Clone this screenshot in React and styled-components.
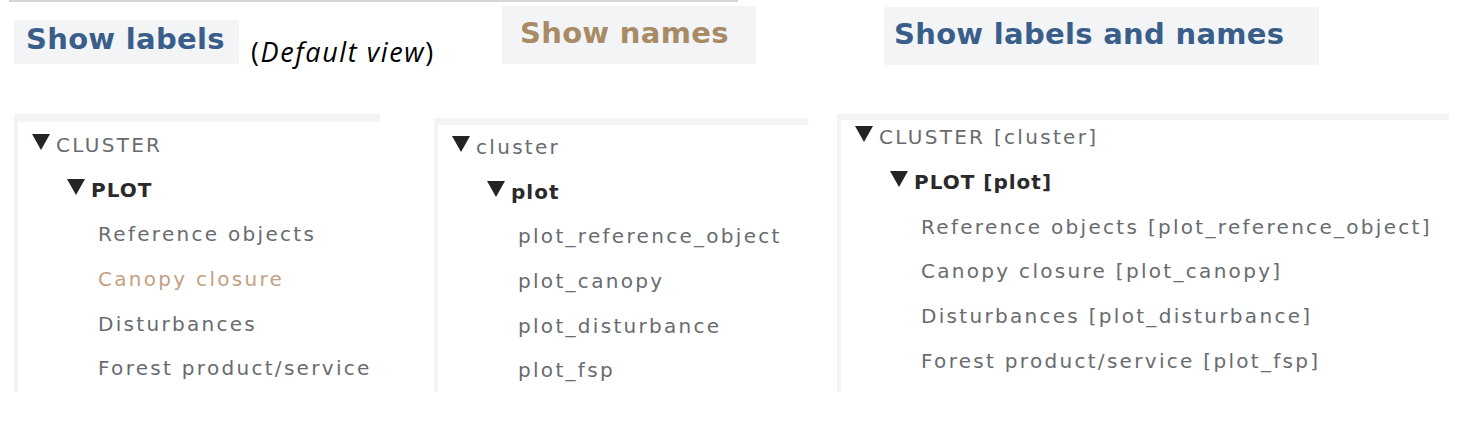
import React from "react";
import styled, { createGlobalStyle } from "styled-components";

const GlobalStyle = createGlobalStyle`
  html, body { margin: 0; padding: 0; background: #ffffff; }
  body { font-family: "DejaVu Sans", "Noto Sans", sans-serif; }
  * { box-sizing: border-box; }
`;

const Page = styled.div`
  width: 1459px;
  height: 435px;
  background: #ffffff;
  overflow: hidden;
`;

const TopRule = styled.div`
  width: 729px;
  height: 2px;
  margin-left: 9px;
  background: #d6d6d6;
`;

const Columns = styled.div`
  display: flex;
  padding-left: 14px;
`;

const Column = styled.section`
  display: flex;
  flex-direction: column;
  min-width: 0;
  flex: ${(p) => (p.$width ? `0 0 ${p.$width}px` : "1 1 auto")};
`;

const Header = styled.div`
  display: flex;
  align-items: flex-start;
  height: 62px;
`;

const ViewButton = styled.div`
  flex: none;
  margin-top: ${(p) => p.$top}px;
  margin-left: ${(p) => p.$left || 0}px;
  width: ${(p) => p.$w}px;
  height: ${(p) => p.$h}px;
  padding-left: ${(p) => p.$pl}px;
  padding-top: ${(p) => p.$pt}px;
  background: #f3f4f6;
  font-family: "DejaVu Sans", sans-serif;
  font-weight: 700;
  font-size: 29px;
  line-height: 29px;
  letter-spacing: 0.3px;
  white-space: nowrap;
  color: ${(p) => (p.$tone === "gold" ? "#a88a64" : "#3a5e8a")};
`;

const Note = styled.div`
  flex: none;
  margin-top: 32px;
  margin-left: 12px;
  font-family: "Open Sans", "Liberation Sans", sans-serif;
  font-size: 27px;
  line-height: 36px;
  letter-spacing: 1.6px;
  color: #000000;
  white-space: nowrap;

  em {
    font-style: italic;
  }
`;

const TreePanel = styled.div`
  flex: none;
  margin-top: ${(p) => p.$top}px;
  width: ${(p) => p.$w}px;
  height: ${(p) => p.$h}px;
  padding-top: ${(p) => p.$strip}px;
  padding-left: 4px;
  background: #f3f4f6;
`;

const TreeBody = styled.div`
  display: flow-root;
  height: 100%;
  background: #ffffff;
`;

const TreeList = styled.ul`
  list-style: none;
  margin: ${(p) => p.$offset}px 0 0 0;
  padding: 0;
`;

const indent = { 0: 14, 1: 49, leaf: 80 };

const Row = styled.li`
  height: ${(p) => p.$pitch}px;
  line-height: ${(p) => p.$pitch}px;
  padding-left: ${(p) => indent[p.$level]}px;
  white-space: nowrap;
  font-size: 20px;
  letter-spacing: ${(p) => (p.$bold ? 1 : 2.3)}px;
  font-weight: ${(p) => (p.$bold ? 700 : 400)};
  color: ${(p) => (p.$bold ? "#2a2a2a" : p.$accent ? "#c4a082" : "#686b70")};
`;

const CaretIcon = styled.svg`
  display: inline-block;
  width: 18px;
  height: 16px;
  vertical-align: 2px;
  margin-right: 6px;
`;

const Caret = () => (
  <CaretIcon viewBox="0 0 18 16" aria-hidden="true">
    <polygon points="0,0 18,0 9,16" fill="#222426" />
  </CaretIcon>
);

const trees = [
  {
    key: "labels",
    rows: [
      { text: "CLUSTER", level: 0 },
      { text: "PLOT", level: 1, bold: true },
      { text: "Reference objects", level: "leaf" },
      { text: "Canopy closure", level: "leaf", accent: true },
      { text: "Disturbances", level: "leaf" },
      { text: "Forest product/service", level: "leaf" },
    ],
  },
  {
    key: "names",
    rows: [
      { text: "cluster", level: 0 },
      { text: "plot", level: 1, bold: true },
      { text: "plot_reference_object", level: "leaf" },
      { text: "plot_canopy", level: "leaf" },
      { text: "plot_disturbance", level: "leaf" },
      { text: "plot_fsp", level: "leaf" },
    ],
  },
  {
    key: "both",
    rows: [
      { text: "CLUSTER [cluster]", level: 0 },
      { text: "PLOT [plot]", level: 1, bold: true },
      { text: "Reference objects [plot_reference_object]", level: "leaf" },
      { text: "Canopy closure [plot_canopy]", level: "leaf" },
      { text: "Disturbances [plot_disturbance]", level: "leaf" },
      { text: "Forest product/service [plot_fsp]", level: "leaf" },
    ],
  },
];

const Tree = ({ rows, pitch, offset }) => (
  <TreeList $offset={offset}>
    {rows.map((r) => (
      <Row key={r.text} $level={r.level} $bold={r.bold} $accent={r.accent} $pitch={pitch}>
        {r.level !== "leaf" && <Caret />}
        {r.text}
      </Row>
    ))}
  </TreeList>
);

export default function App() {
  return (
    <Page>
      <GlobalStyle />
      <TopRule />
      <Columns>
        <Column $width={420}>
          <Header>
            <ViewButton $top={18} $w={225} $h={44} $pl={12} $pt={4.5}>
              Show labels
            </ViewButton>
            <Note>
              (<em>Default view</em>)
            </Note>
          </Header>
          <TreePanel $top={50} $w={366} $h={278} $strip={8}>
            <TreeBody>
              <Tree rows={trees[0].rows} pitch={44.7} offset={1} />
            </TreeBody>
          </TreePanel>
        </Column>

        <Column $width={403}>
          <Header>
            <ViewButton $top={4} $left={68} $w={254} $h={58} $pl={18} $pt={12.5} $tone="gold">
              Show names
            </ViewButton>
          </Header>
          <TreePanel $top={54} $w={374} $h={274} $strip={7}>
            <TreeBody>
              <Tree rows={trees[1].rows} pitch={44.7} offset={0} />
            </TreeBody>
          </TreePanel>
        </Column>

        <Column>
          <Header>
            <ViewButton $top={5} $left={47} $w={435} $h={58} $pl={10} $pt={12.5}>
              Show labels and names
            </ViewButton>
          </Header>
          <TreePanel $top={50} $w={612} $h={278} $strip={6}>
            <TreeBody>
              <Tree rows={trees[2].rows} pitch={44.8} offset={-5} />
            </TreeBody>
          </TreePanel>
        </Column>
      </Columns>
    </Page>
  );
}
